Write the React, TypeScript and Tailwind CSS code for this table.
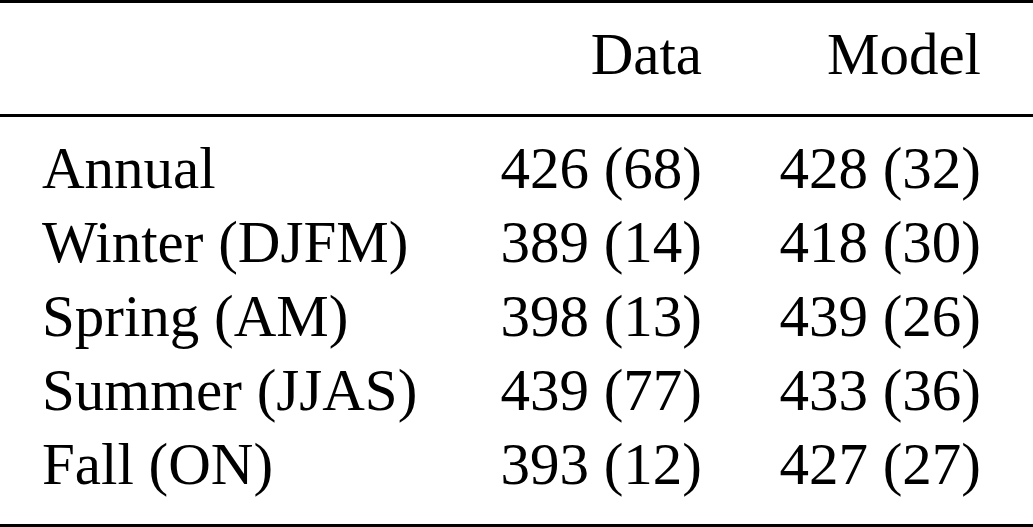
export default function App() {
  const rows: [string, string, string][] = [
    ["Annual", "426 (68)", "428 (32)"],
    ["Winter (DJFM)", "389 (14)", "418 (30)"],
    ["Spring (AM)", "398 (13)", "439 (26)"],
    ["Summer (JJAS)", "439 (77)", "433 (36)"],
    ["Fall (ON)", "393 (12)", "427 (27)"],
  ];
  return (
    <div
      className="w-[1033px] h-[527px] bg-white text-black text-[59px] leading-[74px] overflow-hidden"
      style={{ fontFamily: '"Liberation Serif", "Times New Roman", serif' }}
    >
      <div className="border-t-[3px] border-black pt-[14px] pb-[23px]">
        <div className="grid grid-cols-[378px_282px_279px] pl-[42px]">
          <div></div>
          <div className="text-right">Data</div>
          <div className="text-right">Model</div>
        </div>
      </div>
      <div className="border-t-[3px] border-b-[3px] border-black pt-[14px] pb-[23px]">
        {rows.map((r) => (
          <div key={r[0]} className="grid grid-cols-[378px_282px_279px] pl-[42px]">
            <div className="whitespace-nowrap">{r[0]}</div>
            <div className="text-right whitespace-nowrap">{r[1]}</div>
            <div className="text-right whitespace-nowrap">{r[2]}</div>
          </div>
        ))}
      </div>
    </div>
  );
}
